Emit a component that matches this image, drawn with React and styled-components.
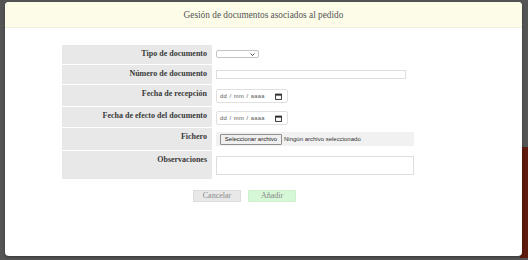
import React from "react";
import styled, { createGlobalStyle } from "styled-components";

const Global = createGlobalStyle`
  html, body { margin: 0; padding: 0; }
  body { width: 528px; height: 260px; overflow: hidden; background: #545454; font-family: "Liberation Serif", serif; }
`;

const Backdrop = styled.div`
  position: relative;
  width: 528px;
  height: 260px;
  display: flex;
  justify-content: flex-end;
  padding-top: 147px;
  box-sizing: border-box;
`;

const PageBlock = styled.div`
  width: 8px;
  height: 111px;
  background: #5e1a0c;
`;

const Modal = styled.div`
  position: absolute;
  left: 5px;
  top: 2px;
  width: 517px;
  height: 254px;
  background: #fff;
  border-radius: 4px;
  overflow: hidden;
  box-shadow: 0 1px 3px rgba(0, 0, 0, 0.35);
`;

const Header = styled.div`
  height: 25px;
  background: #fcfce8;
  border-bottom: 1px solid #f0f0dc;
  display: flex;
  align-items: center;
  justify-content: center;
  font-size: 9.3px;
  color: #555;
`;

const Body = styled.div`
  padding: 17px 0 0 57px;
`;

const FormGrid = styled.div`
  display: grid;
  grid-template-columns: 150px 202px;
  row-gap: 1px;
  background: #fff;
`;

const Label = styled.div`
  height: ${(p) => p.h}px;
  background: #e8e8e8;
  box-sizing: border-box;
  padding: 4px 5px 0 0;
  text-align: right;
  font-weight: bold;
  font-size: 8px;
  line-height: 9px;
  color: #3a3a3a;
`;

const Cell = styled.div`
  height: ${(p) => p.h}px;
  box-sizing: border-box;
  padding: ${(p) => p.pt}px 0 0 4px;
`;

const SelectBox = styled.div`
  width: 43px;
  height: 8px;
  box-sizing: border-box;
  border: 1px solid #c4c4c4;
  border-radius: 2px;
  display: flex;
  align-items: center;
  justify-content: flex-end;
  padding-right: 3px;
`;

const TextBox = styled.div`
  width: 190px;
  height: 9px;
  box-sizing: border-box;
  border: 1px solid #dedede;
`;

const DateBox = styled.div`
  width: 72px;
  height: 14px;
  box-sizing: border-box;
  border: 1px solid #e0e0e0;
  border-radius: 2px;
  display: flex;
  align-items: center;
  justify-content: space-between;
  padding: 0 5px 0 3px;
  font-family: "Liberation Sans", Arial, sans-serif;
  font-size: 5.8px;
  color: #555;
  letter-spacing: 0.3px;
  word-spacing: 0.5px;
`;

const FileBox = styled.div`
  width: 198px;
  height: 14px;
  box-sizing: border-box;
  background: #f1f1f1;
  display: flex;
  align-items: center;
  padding-left: 4px;
  gap: 2px;
  font-family: "Liberation Sans", Arial, sans-serif;
  font-size: 6px;
  color: #333;
`;

const FileButton = styled.button`
  height: 11px;
  width: 62px;
  box-sizing: border-box;
  padding: 0;
  margin: 0;
  border: 1px solid #8f8f8f;
  border-radius: 1px;
  background: #efefef;
  font-family: "Liberation Sans", Arial, sans-serif;
  font-size: 6px;
  color: #222;
  line-height: 9px;
`;

const TextArea = styled.div`
  width: 198px;
  height: 19px;
  box-sizing: border-box;
  border: 1px solid #dedede;
`;

const Actions = styled.div`
  display: flex;
  gap: 7px;
  padding: 11px 0 0 131px;
`;

const Btn = styled.button`
  width: 48px;
  height: 12px;
  box-sizing: border-box;
  padding: 0;
  border: 1px solid ${(p) => (p.ok ? "#ccf0cc" : "#dcdcdc")};
  background: ${(p) => (p.ok ? "#d6f8d6" : "#e8e8e8")};
  font-family: "Liberation Serif", serif;
  font-size: 8px;
  color: #8a8a8a;
  line-height: 10px;
`;

const Chevron = () => (
  <svg width="5" height="3" viewBox="0 0 5 3">
    <path d="M0.5 0.5 L2.5 2.5 L4.5 0.5" fill="none" stroke="#333" strokeWidth="0.9" />
  </svg>
);

const Calendar = () => (
  <svg width="7" height="7" viewBox="0 0 7 7">
    <rect x="0.6" y="1.1" width="5.8" height="5.3" fill="none" stroke="#222" strokeWidth="0.9" />
    <rect x="0.6" y="1.1" width="5.8" height="1.5" fill="#222" />
  </svg>
);

export default function App() {
  return (
    <>
      <Global />
      <Backdrop>
        <PageBlock />
        <Modal>
          <Header>Gesión de documentos asociados al pedido</Header>
          <Body>
            <FormGrid>
              <Label h={19}>Tipo de documento</Label>
              <Cell h={19} pt={5}>
                <SelectBox>
                  <Chevron />
                </SelectBox>
              </Cell>
              <Label h={19}>Número de documento</Label>
              <Cell h={19} pt={5}>
                <TextBox />
              </Cell>
              <Label h={21}>Fecha de recepción</Label>
              <Cell h={21} pt={4}>
                <DateBox>
                  <span>dd / mm / aaaa</span>
                  <Calendar />
                </DateBox>
              </Cell>
              <Label h={20}>Fecha de efecto del documento</Label>
              <Cell h={20} pt={4}>
                <DateBox>
                  <span>dd / mm / aaaa</span>
                  <Calendar />
                </DateBox>
              </Cell>
              <Label h={22}>Fichero</Label>
              <Cell h={22} pt={4}>
                <FileBox>
                  <FileButton>Seleccionar archivo</FileButton>
                  <span>Ningún archivo seleccionado</span>
                </FileBox>
              </Cell>
              <Label h={28}>Observaciones</Label>
              <Cell h={28} pt={5}>
                <TextArea />
              </Cell>
            </FormGrid>
            <Actions>
              <Btn>Cancelar</Btn>
              <Btn ok>Añadir</Btn>
            </Actions>
          </Body>
        </Modal>
      </Backdrop>
    </>
  );
}
